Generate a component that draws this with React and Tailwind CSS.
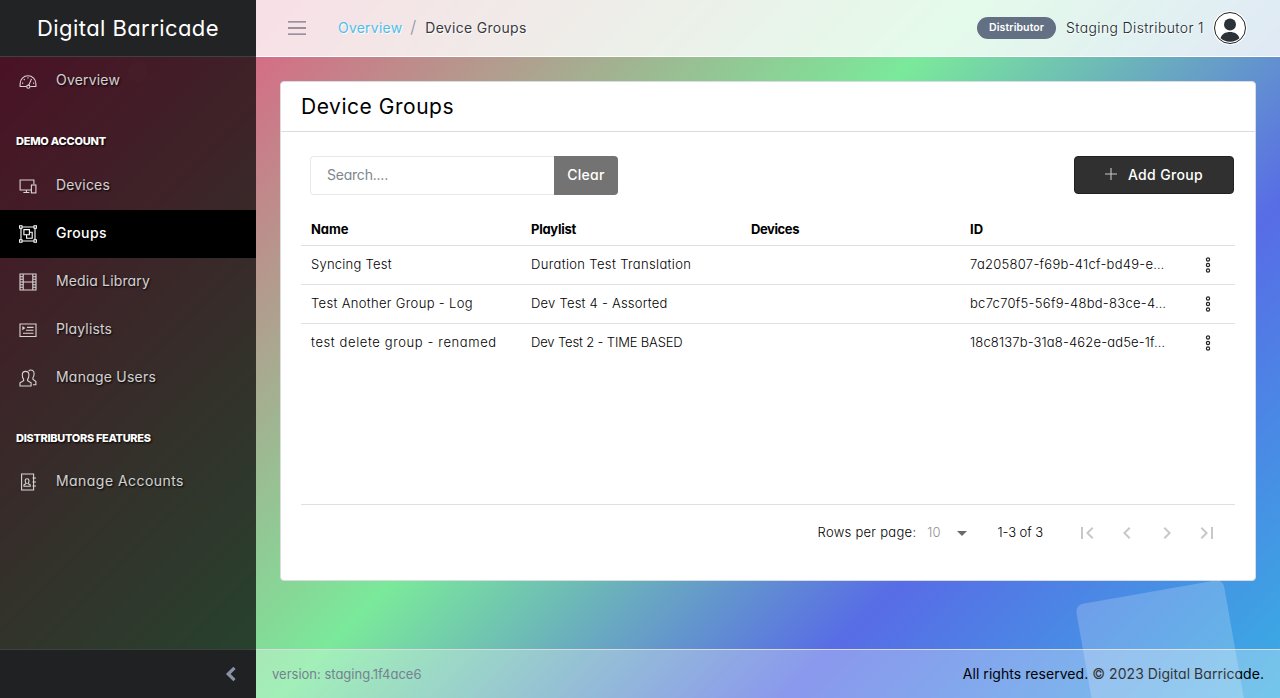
import React from "react";

function Svg({ children, className = "" }) {
  return (
    <svg width="20" height="20" viewBox="0 0 20 20" fill="none" stroke="currentColor" strokeWidth="1.1" className={"shrink-0 " + className}>
      {children}
    </svg>
  );
}

const icons = {
  speed: (
    <Svg>
      <path d="M8.200 15.500H2.100v-2.800a7.900 7.900 0 0 1 15.800 0v2.800h-5.500" />
      <circle cx="10.300" cy="15.700" r="1.600" />
      <path d="M10.800 14.100l2.700-6.200M4 12.100h1.200M15 12.100h1.200M5.800 8.100l.9.900M10 6.300v1.200" />
    </Svg>
  ),
  devices: (
    <Svg>
      <path d="M13.200 14H2.100V4h13.800v4.200M5.400 16.500h6M8.400 14v2.500" />
      <rect x="13.400" y="9" width="4.500" height="7.900" />
    </Svg>
  ),
  groups: (
    <Svg>
      <path d="M4 3h12M4 17h12M3 4v12M17 4v12" />
      <path d="M1.600 1.800h2.400v2.400H1.600zM16 1.800h2.400v2.400H16zM1.600 15.800h2.400v2.400H1.600zM16 15.800h2.400v2.400H16z" />
      <path d="M5.900 5.600h5.500v5.200H5.900z" />
      <path d="M11.400 8.300h2.800v5.900H8.600v-3.400" />
    </Svg>
  ),
  film: (
    <Svg>
      <path d="M2 2h16v16H2zM5.200 2v16M14.800 2v16M5.200 10h9.600M2 4.700h3.200M2 7.300h3.200M2 10h3.200M2 12.700h3.200M2 15.300h3.200M14.800 4.700H18M14.800 7.300H18M14.800 10H18M14.800 12.700H18M14.800 15.300H18" />
    </Svg>
  ),
  playlist: (
    <Svg>
      <path d="M2 4h16v12.500H2zM9 7.400h6.500M8 10.300h7.500M5 13.200h10.500" />
      <path d="M4.400 6v4.200l3-2.100z" fill="currentColor" stroke="none" />
    </Svg>
  ),
  users: (
    <Svg>
      <path d="M2 18v-3.200l3.600-2.200v-1.300C4.500 10 4.300 8.500 4.300 6.700a3.300 3.300 0 0 1 6.600 0c0 1.800-.2 3.300-1.300 4.600v1.300l3.500 2.200V18z" />
      <path d="M10.600 3a3.200 3.200 0 0 1 5.500 2.400c0 1.800-.2 3.200-1.200 4.500v1.400l3 2.200v3.200h-3" />
    </Svg>
  ),
  book: (
    <Svg>
      <path d="M3.600 2h12v16h-12zM14.500 6H18M14.500 10H18M14.500 14H18" />
      <path d="M6 14.300v-1.500l2.200-1.200c-.8-1-1-2-1-3a1.900 1.900 0 0 1 3.800 0c0 1-.2 2-1 3l2.200 1.200v1.500z" />
    </Svg>
  ),
};

function NavItem({ icon, label, active, ls }) {
  return (
    <div
      className={
        "flex h-12 items-center pl-[18px] text-[14px] " +
        (active ? "bg-black font-medium text-white" : "text-white/80 [text-shadow:1px_1px_2px_#000]")
      }
    >
      {icons[icon]}
      <span className={"ml-[18px] pb-[3px] " + ls}>{label}</span>
    </div>
  );
}

const rows = [
  ["Syncing Test", "tracking-[0.24px]", "Duration Test Translation", "tracking-[0.35px]", "7a205807-f69b-41cf-bd49-e…", "tracking-[0.28px]"],
  ["Test Another Group - Log", "tracking-[0.33px]", "Dev Test 4 - Assorted", "tracking-[0.23px]", "bc7c70f5-56f9-48bd-83ce-4…", "tracking-[0.29px]"],
  ["test delete group - renamed", "tracking-[0.61px]", "Dev Test 2 - TIME BASED", "tracking-[-0.15px]", "18c8137b-31a8-462e-ad5e-1f…", "tracking-[0.16px]"],
];

const cols = "grid grid-cols-[220px_220px_219px_226px_47px] items-center pl-[10px] text-[13px]";

function PageIcon({ d }) {
  return (
    <svg width="24" height="24" viewBox="0 0 24 24" fill="#c8c8c8">
      <path d={d} />
    </svg>
  );
}

export default function App() {
  return (
    <div className="relative flex h-[698px] w-[1280px] overflow-hidden bg-[linear-gradient(135deg,#ff337c_0%,#7ae99a_49.3%,#586ce6_75%,#38aee3_100%)] font-['Inter',sans-serif] whitespace-nowrap text-black [font-feature-settings:'cv11']">
      <aside className="relative flex w-64 shrink-0 flex-col bg-black/70">
        <div className="flex h-[57px] items-center justify-center border-b border-[#3b423f] bg-[#212324] text-[22px] tracking-[0.42px] text-white">Digital Barricade</div>
        <div className="absolute top-[62px] left-[128px] size-5 rounded-full bg-white/[0.008]" />
        <nav className="flex-1">
          <NavItem icon="speed" label="Overview" ls="tracking-[0.18px]" />
          <div className="flex h-[57px] items-center pt-[16px] pl-4 text-[11px] font-extrabold tracking-[-0.22px] text-white [text-shadow:1px_1px_2px_#000]">DEMO ACCOUNT</div>
          <NavItem icon="devices" label="Devices" ls="tracking-[0.17px]" />
          <NavItem icon="groups" label="Groups" active ls="tracking-[0.35px]" />
          <NavItem icon="film" label="Media Library" ls="tracking-[0.14px]" />
          <NavItem icon="playlist" label="Playlists" ls="tracking-[0.13px]" />
          <NavItem icon="users" label="Manage Users" ls="tracking-[0.22px]" />
          <div className="flex h-14 items-center pt-4 pl-4 text-[11px] font-extrabold tracking-[-0.32px] text-white [text-shadow:1px_1px_2px_#000]">DISTRIBUTORS FEATURES</div>
          <NavItem icon="book" label="Manage Accounts" ls="tracking-[0.45px]" />
        </nav>
        <div className="flex h-[49px] items-center justify-end border-t border-[#3c4043] bg-[#202123] pr-[18px]">
          <svg width="14" height="16" viewBox="0 0 14 16" fill="none" stroke="#8a93a6" strokeWidth="3.200">
            <path d="M10.500 1.800L4.200 8l6.300 6.200" />
          </svg>
        </div>
      </aside>

      <div className="flex min-w-0 flex-1 flex-col">
        <header className="flex h-[57px] items-center border-b border-white bg-white/80 pr-[33px] pl-8 text-[14px]">
          <svg width="18" height="14" viewBox="0 0 18 14" stroke="#7d7484" strokeWidth="1.400">
            <path d="M0 .9h18M0 7h18M0 13.100h18" />
          </svg>
          <span className="ml-8 pb-px tracking-[0.22px] text-[#4dbfe8] [text-shadow:1px_1px_1px_#fff]">Overview</span>
          <span className="ml-2 text-[17px] font-light text-[#8a93a2]">/</span>
          <span className="ml-[9px] pb-px tracking-[0.3px] text-[#3a3a3f] [text-shadow:1px_1px_1px_#fff]">Device Groups</span>
          <span className="ml-auto flex h-[22px] w-[79px] items-center justify-center rounded-full bg-[#636f83] text-[10.5px] font-semibold tracking-[0.09px] text-white">Distributor</span>
          <span className="ml-[10px] pb-px font-light tracking-[0.36px] text-[#24262b] [text-shadow:1px_1px_1px_#fff]">Staging Distributor 1</span>
          <svg width="34" height="34" viewBox="0 0 34 34" className="ml-[9px]">
            <circle cx="17" cy="17" r="17" fill="#fff" />
            <circle cx="17" cy="17" r="15.500" fill="#fff" stroke="#222" strokeWidth="1" />
            <circle cx="17" cy="13.500" r="6" fill="#2c3338" />
            <path d="M7.600 27.300C8.600 23 12.500 21 17 21s8.400 2 9.400 6.300A14 14 0 0 1 17 30.700a14 14 0 0 1-9.400-3.400z" fill="#2c3338" />
          </svg>
        </header>

        <main className="flex-1 px-6 pt-6">
          <section className="relative z-20 h-[500px] rounded-[4px] border border-[#d8dbe0] bg-white">
            <div className="flex h-[50px] items-center border-b border-[#d8dbe0] pl-5 text-[21px] tracking-[0.53px]">Device Groups</div>
            <div className="px-5">
              <div className="mt-6 flex h-[39px] pr-px pl-[9px]">
                <div className="flex w-[244px] items-center rounded-l-[4px] border border-r-0 border-[#e6e8ea] pb-0.5 pl-4 text-[14px] tracking-[-0.22px] text-[#80868c]">Search....</div>
                <div className="flex w-16 items-center justify-center rounded-r-[4px] bg-[#737373] pb-0.5 text-[14px] font-medium tracking-[0.3px] text-white">Clear</div>
                <div className="ml-auto flex h-[38px] w-40 items-center justify-center rounded-[4px] border border-[#222] bg-[#303030] text-[14px] font-medium tracking-[0.35px] text-white">
                  <svg width="12" height="12" viewBox="0 0 12 12" stroke="#c8c8c8" strokeWidth="1.100" className="mr-[11px] mb-0.5">
                    <path d="M6 0v12M0 6h12" />
                  </svg>
                  <span className="pb-px">Add Group</span>
                </div>
              </div>
              <div className={cols + " mt-[18px] h-[33px] border-b border-[#dfdfdf] pt-0.5 font-bold"}>
                <span className="tracking-[-0.1px]">Name</span>
                <span className="tracking-[-0.26px]">Playlist</span>
                <span className="tracking-[-0.41px]">Devices</span>
                <span>ID</span>
              </div>
              {rows.map((r, i) => (
                <div key={r[0]} className={cols + " h-[39px] border-b font-[350] " + (i < 2 ? "border-[#dfdfdf]" : "border-transparent")}>
                  <span className={r[1]}>{r[0]}</span>
                  <span className={r[3]}>{r[2]}</span>
                  <span />
                  <span className={r[5]}>{r[4]}</span>
                  <svg width="6" height="16" viewBox="0 0 6 16" fill="none" stroke="#222" strokeWidth="1.200" className="ml-[9px]">
                    <circle cx="3" cy="2.500" r="1.600" />
                    <circle cx="3" cy="8" r="1.600" />
                    <circle cx="3" cy="13.500" r="1.600" />
                  </svg>
                </div>
              ))}
              <div className="mt-[141px] flex h-[57px] items-center justify-end border-t border-[#dfdfdf] pr-4 text-[13px]">
                <span className="font-[350] tracking-[0.28px]">Rows per page:</span>
                <span className="ml-[11px] font-[350] text-[#909090]">10</span>
                <svg width="10" height="5" viewBox="0 0 10 5" className="ml-[16px]" fill="#6a6a6a">
                  <path d="M0 0h10L5 5z" />
                </svg>
                <span className="ml-[31px] font-[350] tracking-[-0.08px]">1-3 of 3</span>
                <div className="ml-8 flex gap-4">
                  <PageIcon d="M18.410 16.590L13.820 12l4.590-4.590L17 6l-6 6 6 6zM6 6h2v12H6z" />
                  <PageIcon d="M15.410 7.410L14 6l-6 6 6 6 1.410-1.410L10.830 12z" />
                  <PageIcon d="M10 6L8.590 7.410 13.170 12l-4.580 4.590L10 18l6-6z" />
                  <PageIcon d="M5.590 7.410L10.180 12l-4.590 4.590L7 18l6-6-6-6zM16 6h2v12h-2z" />
                </div>
              </div>
            </div>
          </section>
        </main>

        <footer className="flex h-[49px] items-center justify-between border-t border-[#d8dbe0] bg-white/30 px-4">
          <span className="pt-px text-[13px] text-[#768192]">version: staging.1f4ace6</span>
          <span className="pb-px text-[14px] tracking-[0.05px]">All rights reserved. © 2023 Digital Barricade.</span>
        </footer>
      </div>
      <div className="absolute top-[591px] left-[1087px] z-10 size-[150px] -rotate-10 rounded-[8px] bg-white/20" />
    </div>
  );
}
